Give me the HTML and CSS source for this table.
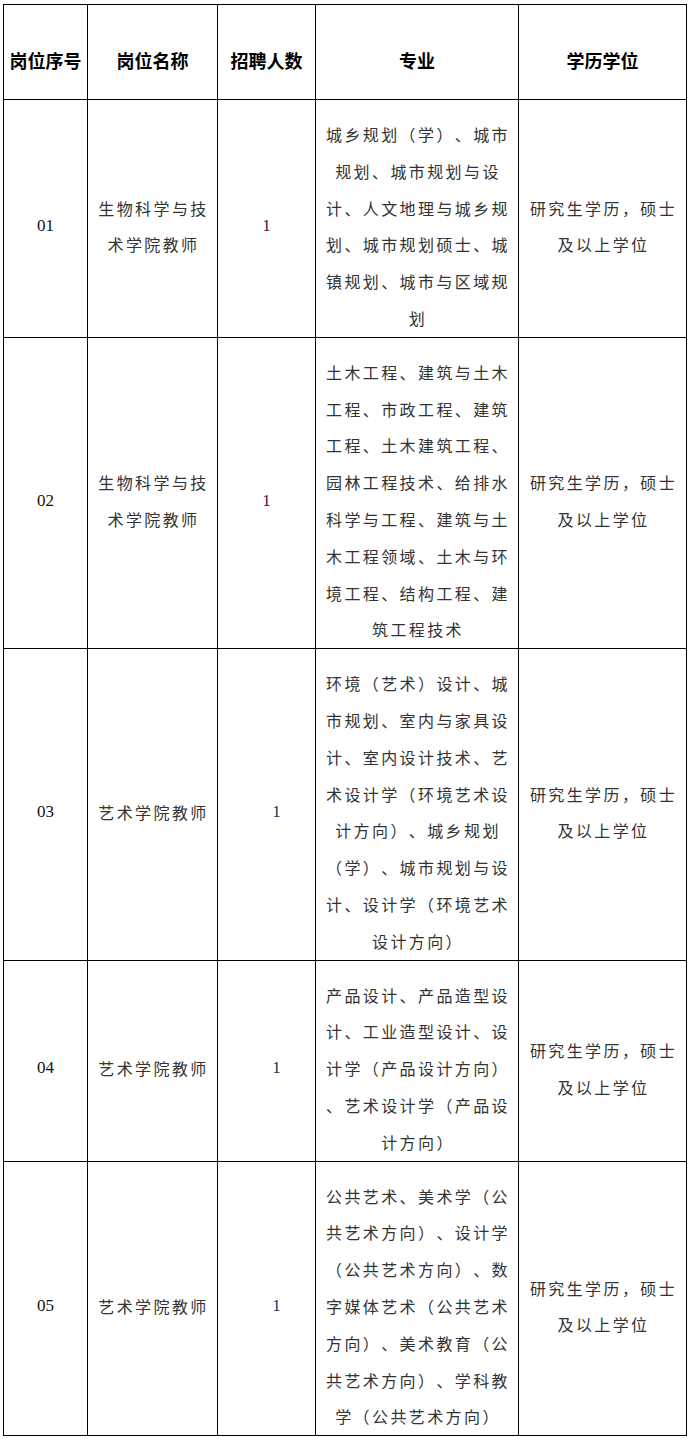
FILE: index.html
```html
<!DOCTYPE html>
<html lang="zh-CN">
<head>
<meta charset="utf-8">
<title>岗位表</title>
<link rel="stylesheet" href="styles.css">
</head>
<body>
<table class="jobs">
  <colgroup>
    <col class="c-no">
    <col class="c-name">
    <col class="c-count">
    <col class="c-major">
    <col class="c-degree">
  </colgroup>
  <thead>
    <tr>
      <th>岗位序号</th>
      <th>岗位名称</th>
      <th>招聘人数</th>
      <th>专业</th>
      <th>学历学位</th>
    </tr>
  </thead>
  <tbody>
    <tr>
      <td class="num">01</td>
      <td class="txt">生物科学与技<br>术学院教师</td>
      <td class="num count a">1</td>
      <td class="txt">城乡规划（学）、城市<br>规划、城市规划与设<br>计、人文地理与城乡规<br>划、城市规划硕士、城<br>镇规划、城市与区域规<br>划</td>
      <td class="txt">研究生学历，硕士<br>及以上学位</td>
    </tr>
    <tr>
      <td class="num">02</td>
      <td class="txt">生物科学与技<br>术学院教师</td>
      <td class="num count a">1</td>
      <td class="txt">土木工程、建筑与土木<br>工程、市政工程、建筑<br>工程、土木建筑工程、<br>园林工程技术、给排水<br>科学与工程、建筑与土<br>木工程领域、土木与环<br>境工程、结构工程、建<br>筑工程技术</td>
      <td class="txt">研究生学历，硕士<br>及以上学位</td>
    </tr>
    <tr>
      <td class="num">03</td>
      <td class="txt">艺术学院教师</td>
      <td class="num count b">1</td>
      <td class="txt">环境（艺术）设计、城<br>市规划、室内与家具设<br>计、室内设计技术、艺<br>术设计学（环境艺术设<br>计方向）、城乡规划<br>（学）、城市规划与设<br>计、设计学（环境艺术<br>设计方向）</td>
      <td class="txt">研究生学历，硕士<br>及以上学位</td>
    </tr>
    <tr>
      <td class="num">04</td>
      <td class="txt">艺术学院教师</td>
      <td class="num count b">1</td>
      <td class="txt">产品设计、产品造型设<br>计、工业造型设计、设<br>计学（产品设计方向）<br>、艺术设计学（产品设<br>计方向）</td>
      <td class="txt">研究生学历，硕士<br>及以上学位</td>
    </tr>
    <tr>
      <td class="num">05</td>
      <td class="txt">艺术学院教师</td>
      <td class="num count b">1</td>
      <td class="txt">公共艺术、美术学（公<br>共艺术方向）、设计学<br>（公共艺术方向）、数<br>字媒体艺术（公共艺术<br>方向）、美术教育（公<br>共艺术方向）、学科教<br>学（公共艺术方向）</td>
      <td class="txt">研究生学历，硕士<br>及以上学位</td>
    </tr>
  </tbody>
</table>
</body>
</html>
```
FILE: styles.css
```css
html, body {
  margin: 0;
  padding: 0;
  background: #ffffff;
}

body {
  padding: 4px 0 0 3px;
  font-family: "Noto Sans CJK SC", "Noto Sans", sans-serif;
}

.jobs {
  border-collapse: collapse;
  table-layout: fixed;
  width: 683px;
}

.c-no { width: 84px; }
.c-name { width: 130px; }
.c-count { width: 98px; }
.c-major { width: 203px; }
.c-degree { width: 168px; }

.jobs th,
.jobs td {
  border: 1px solid #000;
  text-align: center;
  vertical-align: middle;
  padding: 16px 0 0 0;
}

.jobs th {
  height: 78px;
  font-size: 18px;
  font-weight: 700;
  color: #000;
  line-height: 24px;
}

.jobs td {
  font-size: 16px;
  line-height: 36.8px;
  color: #333;
}

.jobs td.txt {
  letter-spacing: 2.4px;
  padding-left: 2px;
  font-weight: 400;
  text-spacing-trim: space-all;
  font-feature-settings: "fwid" 1;
}

.jobs td.num {
  font-family: "Liberation Serif", "Times New Roman", serif;
  font-size: 17px;
  color: #111;
}

.jobs td.count.a {
  color: #4a1048;
}

.jobs td.count.b {
  color: #1c2c6a;
  padding-left: 20px;
}
```
